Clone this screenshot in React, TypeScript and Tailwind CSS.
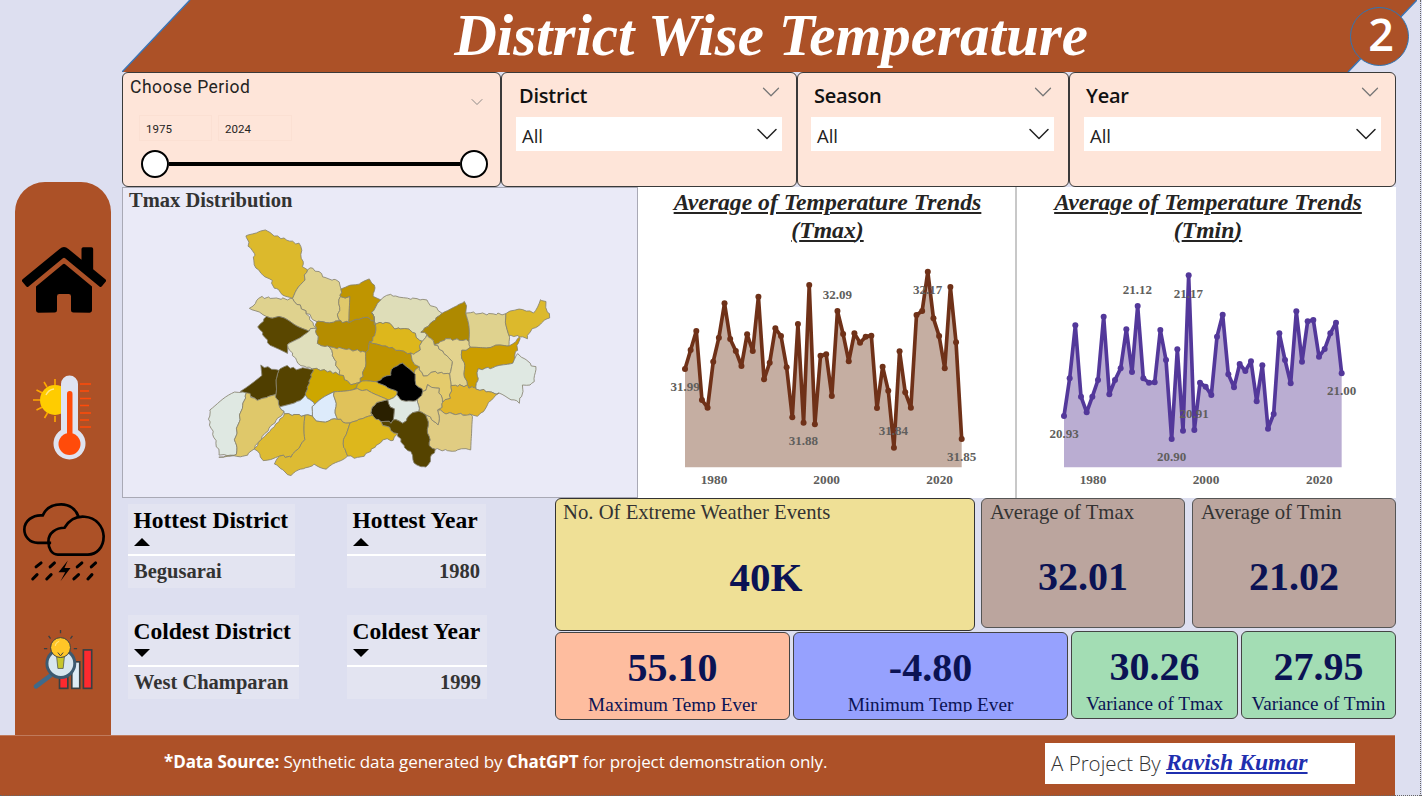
import React from 'react';
import { FaHome } from 'react-icons/fa';
import { ChevronDown } from 'lucide-react';

type District = { color: string; pts: string };

// traced at 3x from the map, so 1110x780 units draw at 370x260
const districts: District[] = [
  { color: '#DCB92C', pts: '168,48 225,30 250,50 330,75 340,145 352,150 340,190 305,240 280,225 250,205 245,185 210,165 190,125 195,100 180,90' },
  { color: '#DFD28E', pts: '352,150 370,148 415,182 440,182 455,210 450,235 445,290 450,308 378,310 345,275 305,240 340,190' },
  { color: '#E0C96B', pts: '450,235 478,235 480,300 478,310 450,308 445,290' },
  { color: '#BF9500', pts: '455,210 535,182 552,200 552,235 570,240 545,280 555,305 520,295 478,310 480,300 478,235 450,235' },
  { color: '#DEDDB8', pts: '570,240 600,228 660,240 700,240 755,280 692,340 710,345 695,370 660,330 615,328 590,310 555,315 545,280' },
  { color: '#AE8900', pts: '692,340 755,280 825,250 830,280 838,365 770,360 735,375 710,345' },
  { color: '#DFD28E', pts: '830,280 890,285 945,285 955,350 960,378 880,385 838,388 838,365' },
  { color: '#DCB92C', pts: '945,285 990,270 1030,280 1050,245 1065,250 1078,295 1025,330 1010,360 990,352 955,350' },
  { color: '#DFD28E', pts: '180,265 215,235 290,240 305,240 345,275 378,325 355,335 280,295 230,295' },
  { color: '#5A4700', pts: '205,325 230,295 280,295 355,335 330,360 290,375 290,405 240,380' },
  { color: '#E0DFBC', pts: '290,375 330,360 355,335 378,325 385,375 420,385 450,465 370,448 330,440' },
  { color: '#B58D00', pts: '378,310 450,308 478,310 520,295 555,305 555,350 540,370 530,400 470,390 420,385 385,375 378,325' },
  { color: '#E3C96B', pts: '420,385 470,390 530,400 530,430 510,490 480,495 450,465' },
  { color: '#DDB71C', pts: '545,280 555,315 590,310 615,328 660,330 695,370 685,400 660,405 600,385 540,370 555,350 555,305' },
  { color: '#BF9500', pts: '540,370 600,385 660,405 665,430 685,445 670,460 640,435 610,445 600,470 560,485 510,490 530,430 530,400' },
  { color: '#E0D18A', pts: '695,370 710,345 735,375 785,425 780,465 735,460 700,470 685,445 665,430 660,405 685,400' },
  { color: '#E3D38E', pts: '735,375 770,360 838,365 838,388 815,395 830,500 785,500 780,465 785,425' },
  { color: '#CC9E00', pts: '815,395 838,388 880,385 960,378 990,352 970,430 920,445 865,450 860,505 835,505 830,500' },
  { color: '#DFE8E2', pts: '865,450 920,445 970,430 985,405 1035,445 1035,490 1000,500 990,550 960,540 925,525 860,510 860,505' },
  { color: '#E4CB6C', pts: '670,460 685,445 700,470 735,460 780,465 785,500 780,535 760,550 745,510 715,500 700,520 680,495' },
  { color: '#E1B52A', pts: '785,500 830,500 835,505 860,505 860,510 925,525 890,560 870,590 760,582 745,570 755,565 760,550 780,535' },
  { color: '#E0CC82', pts: '710,590 745,615 745,570 760,582 850,590 845,690 775,695 735,690 720,680 715,640' },
  { color: '#E0CC82', pts: '685,540 700,520 715,500 745,510 760,550 755,565 745,570 745,615 710,590 685,575' },
  { color: '#DDB71C', pts: '510,490 560,485 620,520 620,530 590,545 530,515 490,510' },
  { color: '#CDA700', pts: '370,448 450,465 480,495 510,490 490,510 430,520 375,555 345,530' },
  { color: '#000000', pts: '560,485 600,470 610,445 640,435 670,460 680,495 700,520 685,540 650,550 620,530 620,520' },
  { color: '#DFE8E2', pts: '590,545 620,530 650,550 685,540 685,575 665,580 640,610 610,600 610,570' },
  { color: '#2A2000', pts: '540,580 560,550 590,545 610,570 610,600 605,610 565,605' },
  { color: '#554300', pts: '565,605 605,610 610,600 640,610 665,580 685,575 710,590 715,640 720,680 735,690 710,745 680,740 660,700 640,680 620,645' },
  { color: '#554300', pts: '265,455 280,440 320,450 370,448 345,530 310,555 270,565 255,525' },
  { color: '#4F3E00', pts: '150,515 215,470 215,440 265,455 255,525 200,545' },
  { color: '#DFE8E2', pts: '60,570 135,520 170,520 155,570 135,660 140,708 90,710 55,600' },
  { color: '#DFC86A', pts: '88,712 140,708 135,660 155,570 170,520 200,545 255,525 270,565 285,575 205,670 170,710' },
  { color: '#DDEBFB', pts: '285,575 270,565 310,555 345,530 375,555 368,560 365,590 345,590 285,585' },
  { color: '#DDEBFB', pts: '368,560 375,555 430,520 435,540 440,600 385,610 365,590' },
  { color: '#E0C25A', pts: '430,520 490,510 530,515 590,545 560,550 540,580 545,590 480,615 440,600 435,540' },
  { color: '#DDBB33', pts: '205,670 285,585 345,590 345,660 305,715 270,710 220,725 195,690' },
  { color: '#DDBB33', pts: '345,590 365,590 385,610 440,600 480,615 460,665 470,710 410,750 375,735 330,750 300,770 255,735 270,710 305,715 345,660' },
  { color: '#DDB71C', pts: '480,615 545,590 540,580 565,605 620,645 610,665 580,660 540,700 500,718 470,710 460,665' },
];

// rough up the straight edges; same field for all so shared borders stay together
const warp = (x: number, y: number) =>
  `${(x + 3 * Math.sin(x * 0.9 + y * 1.3)).toFixed(1)},${(y + 3 * Math.cos(x * 1.1 - y * 0.7)).toFixed(1)}`;

const jagged = (pts: string) => {
  const list = pts.split(' ').map((p) => p.split(',').map(Number));
  const out: string[] = [];
  list.forEach(([x, y], i) => {
    const [nx, ny] = list[(i + 1) % list.length];
    const steps = Math.max(1, Math.round(Math.hypot(nx - x, ny - y) / 10));
    for (let s = 0; s < steps; s++) out.push(warp(x + ((nx - x) * s) / steps, y + ((ny - y) * s) / steps));
  });
  return out.join(' ');
};

const tmax = [537, 480, 423, 630, 653, 515, 443, 340, 447, 483, 528, 433, 483, 320, 568, 518, 415, 438, 532, 682, 402, 698, 285, 703, 497, 493, 618, 363, 432, 514, 430, 458, 440, 437, 654, 530, 602, 773, 484, 607, 653, 375, 363, 245, 385, 438, 535, 291, 457, 747];
const tmin = [678, 565, 406, 620, 667, 620, 570, 380, 613, 570, 535, 418, 546, 348, 565, 578, 577, 420, 510, 747, 478, 722, 256, 720, 578, 590, 615, 440, 374, 553, 592, 522, 543, 514, 634, 526, 716, 672, 430, 510, 580, 364, 515, 394, 390, 500, 477, 430, 398, 550];

type TrendProps = {
  title: string;
  values: number[];
  x0: number;
  step: number;
  line: string;
  area: string;
  labels: [string, number, number][];
  years: [string, number][];
  className: string;
  innerClass: string;
};

const TrendChart: React.FC<TrendProps> = ({ title, values, x0, step, line, area, labels, years, className, innerClass }) => {
  const pts = values.map((y, i) => [x0 + i * step, y]);
  const path = pts.map((p) => p.join(',')).join(' ');
  const last = x0 + (values.length - 1) * step;
  return (
    <div className={className}>
      <div className={innerClass}>
        <div className="h-[58px] pt-[1px] text-center text-[23.7px] leading-[28px] font-bold italic underline text-[#252423] whitespace-nowrap">
          Average of Temperature Trends
          <br />({title})
        </div>
        <svg viewBox="0 165 1140 750" className="w-[380px] h-[250px] shrink-0">
          <polygon points={`${x0},832 ${path} ${last},832`} fill={area} />
          <polyline points={path} fill="none" stroke={line} strokeWidth="11" strokeLinejoin="round" />
          {pts.map(([x, y]) => (
            <circle key={x} cx={x} cy={y} r="9" fill={line} />
          ))}
          {labels.map(([t, x, y]) => (
            <text key={t} x={x} y={y + 12} textAnchor="middle" fontSize="39" fontWeight="700" fill="#605E5C">
              {t}
            </text>
          ))}
          {years.map(([t, x]) => (
            <text key={t} x={x} y={881} textAnchor="middle" fontSize="40" fontWeight="700" fill="#605E5C">
              {t}
            </text>
          ))}
        </svg>
      </div>
    </div>
  );
};

const ThermoIcon = () => (
  <svg viewBox="30 372 64 92" className="w-[64px] h-[92px]">
    <g stroke="#FFA800" strokeWidth="1.6">
      <path d="M33 401h7M55 380v6M44 383l3 5M36.5 391l6 3M36.5 411l6-3M44.5 419l3-5M55 423v-6" />
    </g>
    <circle cx="55" cy="401" r="15" fill="#FFCC00" />
    <path d="M46 396a10 10 0 0 1 8-6" stroke="#FFE88A" strokeWidth="1.4" fill="none" />
    <path d="M61 385a8.500 8.500 0 0 1 17 0v46a16 16 0 1 1-17 0z" fill="#DFE3F0" />
    <rect x="67" y="392" width="5.500" height="48" rx="2.700" fill="#FF4B0A" />
    <circle cx="69.500" cy="445" r="11" fill="#FF4B0A" />
    <path d="M80 385h11M80 392h9M80 399.500h11M80 406.500h9M80 414h11M80 421h9M80 428h11" stroke="#FF4B0A" strokeWidth="1.6" />
  </svg>
);

const StormIcon = () => (
  <svg viewBox="60 65 260 245" className="w-[87px] h-[82px]">
    <g fill="none" stroke="#000" strokeWidth="8">
      <path d="M150 190H110C85 190 70 170 70 150C70 125 95 105 125 108C135 85 155 75 180 75C205 75 225 90 232 112" />
      <path d="M170 225C150 225 142 205 142 185C142 160 165 145 190 145C205 120 225 110 250 112C285 115 305 140 307 170C307 205 285 225 260 225Z" />
    </g>
    <path d="M105 262L120 250M147 262L160 250M228 262L242 250M270 262L283 250M95 298L108 285M137 298L150 285M218 298L232 285M260 298L272 285" stroke="#000" strokeWidth="9" strokeLinecap="round" />
    <path d="M200 243L172 278H192L178 305L208 265H190Z" fill="#000" />
  </svg>
);

const InsightIcon = () => (
  <svg viewBox="100 450 190 185" className="w-[63px] h-[62px]">
    <g stroke="#3A3F42" strokeWidth="5">
      <rect x="183" y="590" width="25" height="38" fill="#FF2A2F" />
      <rect x="220" y="548" width="24" height="80" fill="#DDEBF5" />
      <rect x="255" y="512" width="25" height="116" fill="#FF2A2F" />
    </g>
    <path d="M155 590L112 622" stroke="#3F6A8A" strokeWidth="14" strokeLinecap="round" />
    <circle cx="187" cy="553" r="42" fill="#D8E6EE" stroke="#3D5A70" strokeWidth="9" />
    <path d="M186 452v10M150 470l6 8M222 470l-6 8M136 508h10M226 508h10" stroke="#3A3F42" strokeWidth="4" />
    <path d="M174 530h24l-4 38h-16z" fill="#C8C62B" stroke="#3A3F42" strokeWidth="2" />
    <circle cx="186" cy="505" r="30" fill="#FFC627" stroke="#3A3F42" strokeWidth="3" />
    <path d="M178 520l8 10 8-10" fill="none" stroke="#3A3F42" strokeWidth="3" />
    <path d="M170 500a16 16 0 0 1 12-14" fill="none" stroke="#FFE88A" strokeWidth="3" />
  </svg>
);

const Dropdown: React.FC<{ title: string; className: string; boxClass: string }> = ({ title, className, boxClass }) => (
  <div className={`relative h-[115px] bg-[#FEE5D9] border border-[#3a3a3a] rounded-[6px] font-['Open_Sans',sans-serif] ${className}`}>
    <ChevronDown className="absolute right-[10px] top-[4px] w-[30px] h-[30px] text-[#777]" strokeWidth={1} />
    <div className="pt-[9px] text-[20px] leading-[28px] font-semibold text-[#111] tracking-[-0.2px]">{title}</div>
    <div className={`flex items-center justify-between mt-[7px] h-[34px] bg-white pl-[6px] ${boxClass}`}>
      <span className="pt-[3px] text-[18.5px] text-[#222]">All</span>
      <ChevronDown className="mr-[-3px] w-[36px] h-[36px] text-[#222] shrink-0" strokeWidth={1} />
    </div>
  </div>
);

const StatBlock: React.FC<{ title: string; up: boolean; value: string; className: string; valueClass?: string }> = ({ title, up, value, className, valueClass }) => (
  <div className={`h-[84px] bg-[#E3E4F1] ${className}`}>
    <div className="h-[50px] pl-[5.5px] pt-[1px] text-[23.5px] leading-[30px] font-bold text-black whitespace-nowrap">
      {title}
      <div className={`mt-[3px] w-0 h-0 border-l-[8px] border-r-[8px] border-transparent ${up ? 'border-b-[8px] border-b-black' : 'border-t-[8px] border-t-black'}`} />
    </div>
    <div className={`border-t-2 border-white px-[6px] pt-[1px] text-[20.5px] leading-[28px] font-bold text-[#333] ${valueClass ?? ''}`}>{value}</div>
  </div>
);

const SmallCard: React.FC<{ value: string; label: string; className: string; clip?: boolean }> = ({ value, label, className, clip }) => (
  <div className={`h-[88px] border border-[#444] rounded-[6px] text-center text-[#0B1354] overflow-hidden ${className}`}>
    <div className="pt-[11px] text-[40px] leading-[48px] font-bold">{value}</div>
    <div className={clip ? 'h-[19px] mt-[1px] overflow-hidden text-[19.2px] leading-[24px]' : 'mt-[1px] text-[19.2px] leading-[24px]'}>{label}</div>
  </div>
);

const App: React.FC = () => {
  return (
    <div className="relative w-[1422px] h-[796px] overflow-hidden bg-[#DDDFF0] font-['Liberation_Serif',serif]">
      <div className="flex h-[735px]">
        {/* left nav */}
        <div className="w-[122px] shrink-0 pl-[15px] pt-[182px]">
          <div className="flex flex-col items-center w-[96px] h-full rounded-t-[30px] bg-[#AC5127]">
            <FaHome className="mt-[59px] ml-[2px] w-[84px] h-[78px] text-black" />
            <div className="mt-[52px] ml-[-2px]">
              <ThermoIcon />
            </div>
            <div className="mt-[38px] ml-[2px]">
              <StormIcon />
            </div>
            <div className="mt-[46px]">
              <InsightIcon />
            </div>
          </div>
        </div>

        <div className="flex-1 flex flex-col min-w-0">
          {/* title banner */}
          <div className="relative h-[72px] w-[1295px]">
            <div className="h-full bg-[#AC5127] [clip-path:polygon(68px_0,1295px_0,1226px_100%,0_100%)] text-center text-white text-[59px] leading-[70px] font-bold italic pl-[3px]">
              District Wise Temperature
            </div>
            <svg className="absolute inset-0 w-full h-full" viewBox="0 0 1295 72">
              <path d="M68 0L0 72M1295 0L1226 72" stroke="#3B74B4" strokeWidth="1.500" />
            </svg>
            <div className="absolute left-[1228px] top-[7px] flex items-center justify-center w-[59px] h-[59px] pb-[5px] pl-[3px] rounded-full bg-[#AC5127] border border-[#2E75B6] text-white text-[45px] font-semibold font-['Open_Sans',sans-serif]">
              2
            </div>
          </div>

          {/* filters */}
          <div className="flex w-[1274px]">
            <div className="relative w-[379px] h-[115px] bg-[#FEE5D9] border border-[#3a3a3a] rounded-[6px] font-['Roboto',sans-serif]">
              <div className="pl-[7px] pt-[2px] text-[17.500px] leading-[24px] tracking-[0.5px] text-[#252423]">Choose Period</div>
              <ChevronDown className="absolute right-[13px] top-[19px] w-[20px] h-[20px] text-[#777]" strokeWidth={1} />
              <div className="flex gap-[6px] ml-[16px] mt-[16px]">
                <div className="w-[73px] h-[26px] border border-[#FBE0D3] pl-[6px] text-[11.500px] leading-[26px] text-[#252423]">1975</div>
                <div className="w-[74px] h-[26px] border border-[#FBE0D3] pl-[6px] text-[11.500px] leading-[26px] text-[#252423]">2024</div>
              </div>
              <div className="flex items-center ml-[18px] mr-[12px] mt-[9px]">
                <div className="w-[28px] h-[28px] rounded-full bg-white border-2 border-black shrink-0" />
                <div className="flex-1 h-[4px] bg-black" />
                <div className="w-[28px] h-[28px] rounded-full bg-white border-2 border-black shrink-0" />
              </div>
            </div>
            <Dropdown title="District" className="w-[296px] pl-[17px]" boxClass="ml-[-3px] w-[266px]" />
            <Dropdown title="Season" className="w-[272px] pl-[16px]" boxClass="ml-[-3px] w-[243px]" />
            <Dropdown title="Year" className="w-[327px] pl-[16px]" boxClass="ml-[-2px] w-[297px]" />
          </div>

          {/* map and trends */}
          <div className="flex w-[1274px] h-[311px]">
            <div className="w-[516px] h-full shrink-0 bg-[#EAEAF7] border border-[#A9A9B5]">
              <div className="h-[31px] pl-[6px] text-[20.500px] leading-[24px] font-bold text-[#333]">Tmax Distribution</div>
              <svg viewBox="0 0 1110 780" className="w-[370px] h-[260px] ml-[67px]">
                {districts.map((d) => (
                  <polygon key={d.pts} points={jagged(d.pts)} fill={d.color} stroke="#85826F" strokeWidth="2.500" strokeLinejoin="round" />
                ))}
              </svg>
            </div>
            <TrendChart
              title="Tmax"
              values={tmax}
              x0={135}
              step={16.94}
              line="#6F3118"
              area="#C5AEA2"
              labels={[['31.99', 135, 590], ['32.09', 592, 314], ['32.17', 863, 299], ['31.88', 490, 752], ['31.84', 760, 722], ['31.85', 965, 800]]}
              years={[['1980', 222], ['2000', 560], ['2020', 899]]}
              className="w-[379px] h-full shrink-0 overflow-hidden bg-white border-r-2 border-[#C8C8C8]"
              innerClass="ml-[2px]"
            />
            <TrendChart
              title="Tmin"
              values={tmin}
              x0={132}
              step={17}
              line="#53389A"
              area="#BAADD2"
              labels={[['20.93', 132, 731], ['21.12', 352, 299], ['21.17', 505, 312], ['20.91', 522, 671], ['20.90', 455, 800], ['21.00', 965, 604]]}
              years={[['1980', 219], ['2000', 558], ['2020', 898]]}
              className="w-[379px] h-full shrink-0 overflow-hidden bg-white"
              innerClass="ml-[3px]"
            />
          </div>

          {/* stats and cards */}
          <div className="flex w-[1274px]">
            <div className="w-[433px] shrink-0 pl-[6px] pt-[6px]">
              <div className="flex">
                <StatBlock title="Hottest District" up value="Begusarai" className="w-[167px]" />
                <StatBlock title="Hottest Year" up value="1980" className="w-[139px] ml-[52px]" valueClass="text-right" />
              </div>
              <div className="flex mt-[27px]">
                <StatBlock title="Coldest District" up={false} value="West Champaran" className="w-[171px]" />
                <StatBlock title="Coldest Year" up={false} value="1999" className="w-[140px] ml-[48px]" valueClass="text-right" />
              </div>
            </div>
            <div className="flex-1 min-w-0">
              <div className="flex">
                <div className="w-[420px] h-[133px] bg-[#EFE096] border border-[#333] rounded-[6px] overflow-hidden">
                  <div className="pl-[7px] text-[20.700px] leading-[26px] text-[#333]">No. Of Extreme Weather Events</div>
                  <div className="mt-[28px] pl-[2px] text-center text-[41px] leading-[48px] font-bold text-[#0B1354]">40K</div>
                </div>
                <div className="w-[204px] h-[130px] ml-[6px] bg-[#BBA59E] border border-[#555] rounded-[6px] overflow-hidden">
                  <div className="pl-[8px] text-[20.700px] leading-[26px] text-[#333]">Average of Tmax</div>
                  <div className="mt-[28px] text-center text-[40px] leading-[48px] font-bold text-[#0B1354]">32.01</div>
                </div>
                <div className="w-[204px] h-[130px] ml-[7px] bg-[#BBA59E] border border-[#555] rounded-[6px] overflow-hidden">
                  <div className="pl-[8px] text-[20.700px] leading-[26px] text-[#333]">Average of Tmin</div>
                  <div className="mt-[28px] text-center text-[40px] leading-[48px] font-bold text-[#0B1354]">21.02</div>
                </div>
              </div>
              <div className="flex mt-[1px]">
                <SmallCard value="55.10" label="Maximum Temp Ever" clip className="w-[235px] bg-[#FEBD9F]" />
                <SmallCard value="-4.80" label="Minimum Temp Ever" clip className="w-[275px] ml-[3px] bg-[#96A1FE]" />
                <SmallCard value="30.26" label="Variance of Tmax" className="w-[167px] ml-[3px] mt-[-1px] bg-[#A3DDB4]" />
                <SmallCard value="27.95" label="Variance of Tmin" className="w-[155px] ml-[3px] mt-[-1px] bg-[#A3DDB4]" />
              </div>
            </div>
          </div>
        </div>
      </div>

      {/* footer */}
      <div className="flex items-center h-[61px] w-[1395px] bg-[#AD5128] border-t border-[#C07A5C]">
        <div className="w-[1045px] pl-[164px] pb-[8px] text-[17px] text-white whitespace-nowrap font-['Open_Sans',sans-serif] tracking-[-0.1px]">
          <span className="font-bold">*Data Source:</span> Synthetic data generated by <span className="font-bold">ChatGPT</span> for project demonstration only.
        </div>
        <div className="flex items-center w-[310px] h-[41px] mb-[6px] pl-[6px] bg-white text-[20.5px] text-[#333] font-['Open_Sans',sans-serif] font-light whitespace-nowrap">
          A Project By&nbsp;
          <span className="font-['Liberation_Serif',serif] font-bold italic text-[23.7px] underline text-[#1F2FAF]">Ravish Kumar</span>
        </div>
      </div>

      {/* page edge */}
      <div className="absolute top-0 right-[1px] bottom-0 border-r border-dotted border-[#666]" />
      <div className="absolute left-0 right-0 bottom-0 border-b border-dotted border-[#666]" />
    </div>
  );
};

export default App;
